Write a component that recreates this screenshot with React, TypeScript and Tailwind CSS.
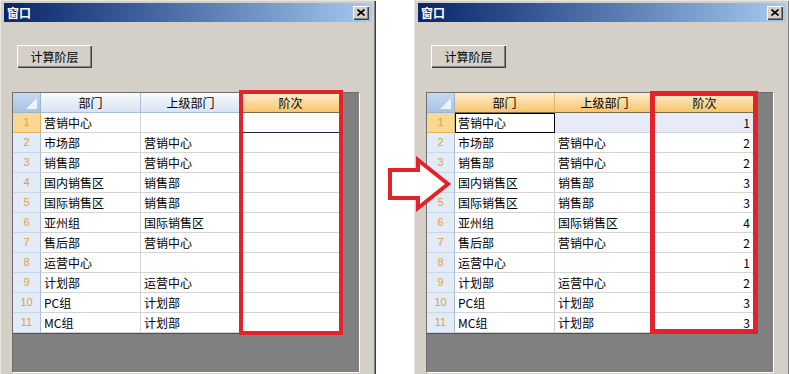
import React from 'react';

type Row = { name: string; parent: string; level: number };

const rows: Row[] = [
  { name: '营销中心', parent: '', level: 1 },
  { name: '市场部', parent: '营销中心', level: 2 },
  { name: '销售部', parent: '营销中心', level: 2 },
  { name: '国内销售区', parent: '销售部', level: 3 },
  { name: '国际销售区', parent: '销售部', level: 3 },
  { name: '亚州组', parent: '国际销售区', level: 4 },
  { name: '售后部', parent: '营销中心', level: 2 },
  { name: '运营中心', parent: '', level: 1 },
  { name: '计划部', parent: '运营中心', level: 2 },
  { name: 'PC组', parent: '计划部', level: 3 },
  { name: 'MC组', parent: '计划部', level: 3 },
];

const headOff =
  'h-[20px] flex items-center justify-center bg-linear-to-b from-[#f8fafd] to-[#d9e3f0] border-r border-[#a9bdd6] border-b border-b-[#a9bdd6]';
const headOn =
  'h-[20px] flex items-center justify-center bg-linear-to-b from-[#fdedcc] to-[#f6c56c] border-r border-[#e0b565] border-b border-b-[#7a6a4a]';
const cell = 'h-[20px] flex items-center border-r border-b border-[#d3d3d3] whitespace-nowrap overflow-hidden';

// fenêtre "窗口" avec la grille, avant / après calcul
const Window: React.FC<{ computed: boolean }> = ({ computed }) => {
  return (
    <div className="w-[376px] h-[390px] shrink-0 bg-[#d4d0c8] pt-[3px] px-[4px] shadow-[inset_1px_1px_0_#e8e6e0,inset_-1px_0_0_#404040,inset_-2px_0_0_#808080]">
      {/* barre de titre */}
      <div className="h-[19px] flex items-center justify-between bg-linear-to-r from-[#0a246a] to-[#a6caf0] pl-[3px] pr-[3px]">
        <span className="text-white text-[12px] font-bold leading-none">窗口</span>
        <div className="w-[16px] h-[14px] bg-[#d4d0c8] flex items-center justify-center shadow-[inset_1px_1px_0_#fff,inset_-1px_-1px_0_#404040,inset_-2px_-2px_0_#808080]">
          <svg width="8" height="7" viewBox="0 0 8 7" aria-hidden="true">
            <path d="M0.5 0.5 L7.5 6.5 M7.5 0.5 L0.5 6.5" stroke="#000" strokeWidth="1.6" />
          </svg>
        </div>
      </div>

      {/* bouton */}
      <div className="pt-[23px] pl-[13px]">
        <button className="w-[75px] h-[23px] bg-[#d4d0c8] text-[12px] text-black flex items-center justify-center shadow-[inset_1px_1px_0_#fff,inset_-1px_-1px_0_#404040,inset_-2px_-2px_0_#808080]">
          计算阶层
        </button>
      </div>

      {/* grille */}
      <div className="mt-[24px] ml-[8px] w-[348px] h-[281px] relative bg-[#808080] border-t border-l border-[#6e6e6e] border-r border-r-white border-b border-b-white">
        <div className="grid grid-cols-[28px_100px_100px_100px] w-[328px] text-[12px] text-black">
          {/* coin */}
          <div className="h-[20px] bg-linear-to-b from-[#c6d8ee] to-[#a9c3e4] border-r border-b border-[#9eb4d2] flex items-end justify-end p-[3px]">
            <svg width="11" height="11" viewBox="0 0 11 11" aria-hidden="true">
              <polygon points="11,0 11,11 0,11" fill="#eef3fa" />
            </svg>
          </div>
          <div className={computed ? headOn : headOff}>部门</div>
          <div className={computed ? headOn : headOff}>上级部门</div>
          <div className={headOn}>阶次</div>

          {rows.map((r, i) => {
            const first = i === 0;
            return (
              <React.Fragment key={i}>
                <div
                  className={
                    'h-[20px] flex items-center justify-center text-[11px] font-["Liberation_Sans",sans-serif] text-[#e0a03a] border-r border-b ' +
                    (first
                      ? 'bg-[#f9d894] border-[#e4b35e]'
                      : 'bg-[#e3ebf6] border-r-[#a9bdd6] border-b-[#c9d6e6]')
                  }
                >
                  {i + 1}
                </div>
                <div
                  className={
                    cell +
                    ' pl-[3px] ' +
                    (computed && first ? 'bg-white outline outline-1 outline-black -outline-offset-1' : 'bg-white')
                  }
                >
                  {r.name}
                </div>
                <div className={cell + ' pl-[3px] ' + (computed && first ? 'bg-[#e7ebf7]' : 'bg-white')}>
                  {r.parent}
                </div>
                <div
                  className={
                    cell +
                    ' justify-end pr-[4px] ' +
                    (computed && first
                      ? 'bg-[#e7ebf7]'
                      : !computed && first
                        ? 'bg-white border-b-[#1a2440]'
                        : 'bg-white')
                  }
                >
                  {computed ? r.level : ''}
                </div>
              </React.Fragment>
            );
          })}
        </div>
        <div className="w-[328px] h-px bg-[#505050]" />

        {/* cadre rouge autour de la colonne 阶次 */}
        <div
          className={
            'absolute border-[#e3232b] pointer-events-none ' +
            (computed
              ? 'left-[223px] top-[-2px] w-[108px] h-[243px] border-[5px]'
              : 'left-[226px] top-[-3px] w-[104px] h-[245px] border-[4px]')
          }
        />
      </div>
    </div>
  );
};

export default function App() {
  return (
    <div className="w-[789px] h-[374px] bg-white relative overflow-hidden flex font-['Noto_Sans_CJK_SC',sans-serif]">
      <Window computed={false} />
      <div className="w-[38px] shrink-0" />
      <Window computed={true} />

      {/* flèche */}
      <svg
        className="absolute left-[386px] top-[156px]"
        width="66"
        height="56"
        viewBox="0 0 66 56"
        aria-hidden="true"
      >
        <polygon
          points="4,14 32,14 32,4 62,28 32,52 32,42 4,42"
          fill="#fff"
          stroke="#e3232b"
          strokeWidth="4"
          strokeLinejoin="miter"
        />
      </svg>
    </div>
  );
}
